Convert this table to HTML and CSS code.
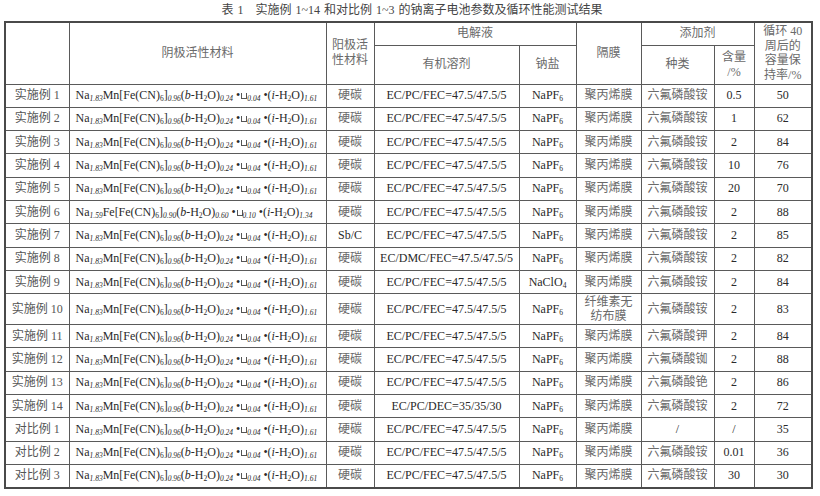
FILE: index.html
```html
<!DOCTYPE html>
<html lang="zh">
<head>
<meta charset="utf-8">
<title>表 1</title>
<link rel="stylesheet" href="styles.css">
</head>
<body>
<div class="title">表 1　实施例 1~14 和对比例 1~3 的钠离子电池参数及循环性能测试结果</div>
<table class="data">
  <colgroup>
    <col class="c1"><col class="c2"><col class="c3"><col class="c4"><col class="c5"><col class="c6"><col class="c7"><col class="c8"><col class="c9">
  </colgroup>
  <thead>
    <tr class="h1">
      <th rowspan="2"></th>
      <th rowspan="2" class="cn">阴极活性材料</th>
      <th rowspan="2" class="cn tall">阳极活<br>性材料</th>
      <th colspan="2" class="cn">电解液</th>
      <th rowspan="2" class="cn">隔膜</th>
      <th colspan="2" class="cn">添加剂</th>
      <th rowspan="2" class="cn tight">循环 40<br>周后的<br>容量保<br>持率/%</th>
    </tr>
    <tr class="h2">
      <th class="cn">有机溶剂</th>
      <th class="cn">钠盐</th>
      <th class="cn">种类</th>
      <th class="cn tight">含量<br>/%</th>
    </tr>
  </thead>
  <tbody>
    <tr><td class="lab">实施例 1</td><td class="f">Na<sub><i>1.83</i></sub>Mn[Fe(CN)<sub>6</sub>]<sub><i>0.96</i></sub>(<i>b</i>-H<sub>2</sub>O)<sub><i>0.24</i></sub> •<span class="vac"></span><sub><i>0.04</i></sub> •(<i>i</i>-H<sub>2</sub>O)<sub><i>1.61</i></sub></td><td class="cn">硬碳</td><td>EC/PC/FEC=47.5/47.5/5</td><td>NaPF<sub>6</sub></td><td class="cn">聚丙烯膜</td><td class="cn">六氟磷酸铵</td><td>0.5</td><td>50</td></tr>
    <tr><td class="lab">实施例 2</td><td class="f">Na<sub><i>1.83</i></sub>Mn[Fe(CN)<sub>6</sub>]<sub><i>0.96</i></sub>(<i>b</i>-H<sub>2</sub>O)<sub><i>0.24</i></sub> •<span class="vac"></span><sub><i>0.04</i></sub> •(<i>i</i>-H<sub>2</sub>O)<sub><i>1.61</i></sub></td><td class="cn">硬碳</td><td>EC/PC/FEC=47.5/47.5/5</td><td>NaPF<sub>6</sub></td><td class="cn">聚丙烯膜</td><td class="cn">六氟磷酸铵</td><td>1</td><td>62</td></tr>
    <tr><td class="lab">实施例 3</td><td class="f">Na<sub><i>1.83</i></sub>Mn[Fe(CN)<sub>6</sub>]<sub><i>0.96</i></sub>(<i>b</i>-H<sub>2</sub>O)<sub><i>0.24</i></sub> •<span class="vac"></span><sub><i>0.04</i></sub> •(<i>i</i>-H<sub>2</sub>O)<sub><i>1.61</i></sub></td><td class="cn">硬碳</td><td>EC/PC/FEC=47.5/47.5/5</td><td>NaPF<sub>6</sub></td><td class="cn">聚丙烯膜</td><td class="cn">六氟磷酸铵</td><td>2</td><td>84</td></tr>
    <tr><td class="lab">实施例 4</td><td class="f">Na<sub><i>1.83</i></sub>Mn[Fe(CN)<sub>6</sub>]<sub><i>0.96</i></sub>(<i>b</i>-H<sub>2</sub>O)<sub><i>0.24</i></sub> •<span class="vac"></span><sub><i>0.04</i></sub> •(<i>i</i>-H<sub>2</sub>O)<sub><i>1.61</i></sub></td><td class="cn">硬碳</td><td>EC/PC/FEC=47.5/47.5/5</td><td>NaPF<sub>6</sub></td><td class="cn">聚丙烯膜</td><td class="cn">六氟磷酸铵</td><td>10</td><td>76</td></tr>
    <tr><td class="lab">实施例 5</td><td class="f">Na<sub><i>1.83</i></sub>Mn[Fe(CN)<sub>6</sub>]<sub><i>0.96</i></sub>(<i>b</i>-H<sub>2</sub>O)<sub><i>0.24</i></sub> •<span class="vac"></span><sub><i>0.04</i></sub> •(<i>i</i>-H<sub>2</sub>O)<sub><i>1.61</i></sub></td><td class="cn">硬碳</td><td>EC/PC/FEC=47.5/47.5/5</td><td>NaPF<sub>6</sub></td><td class="cn">聚丙烯膜</td><td class="cn">六氟磷酸铵</td><td>20</td><td>70</td></tr>
    <tr><td class="lab">实施例 6</td><td class="f">Na<sub><i>1.59</i></sub>Fe[Fe(CN)<sub>6</sub>]<sub><i>0.90</i></sub>(<i>b</i>-H<sub>2</sub>O)<sub><i>0.60</i></sub> •<span class="vac"></span><sub><i>0.10</i></sub> •(<i>i</i>-H<sub>2</sub>O)<sub><i>1.34</i></sub></td><td class="cn">硬碳</td><td>EC/PC/FEC=47.5/47.5/5</td><td>NaPF<sub>6</sub></td><td class="cn">聚丙烯膜</td><td class="cn">六氟磷酸铵</td><td>2</td><td>88</td></tr>
    <tr><td class="lab">实施例 7</td><td class="f">Na<sub><i>1.83</i></sub>Mn[Fe(CN)<sub>6</sub>]<sub><i>0.96</i></sub>(<i>b</i>-H<sub>2</sub>O)<sub><i>0.24</i></sub> •<span class="vac"></span><sub><i>0.04</i></sub> •(<i>i</i>-H<sub>2</sub>O)<sub><i>1.61</i></sub></td><td>Sb/C</td><td>EC/PC/FEC=47.5/47.5/5</td><td>NaPF<sub>6</sub></td><td class="cn">聚丙烯膜</td><td class="cn">六氟磷酸铵</td><td>2</td><td>85</td></tr>
    <tr><td class="lab">实施例 8</td><td class="f">Na<sub><i>1.83</i></sub>Mn[Fe(CN)<sub>6</sub>]<sub><i>0.96</i></sub>(<i>b</i>-H<sub>2</sub>O)<sub><i>0.24</i></sub> •<span class="vac"></span><sub><i>0.04</i></sub> •(<i>i</i>-H<sub>2</sub>O)<sub><i>1.61</i></sub></td><td class="cn">硬碳</td><td>EC/DMC/FEC=47.5/47.5/5</td><td>NaPF<sub>6</sub></td><td class="cn">聚丙烯膜</td><td class="cn">六氟磷酸铵</td><td>2</td><td>82</td></tr>
    <tr><td class="lab">实施例 9</td><td class="f">Na<sub><i>1.83</i></sub>Mn[Fe(CN)<sub>6</sub>]<sub><i>0.96</i></sub>(<i>b</i>-H<sub>2</sub>O)<sub><i>0.24</i></sub> •<span class="vac"></span><sub><i>0.04</i></sub> •(<i>i</i>-H<sub>2</sub>O)<sub><i>1.61</i></sub></td><td class="cn">硬碳</td><td>EC/PC/FEC=47.5/47.5/5</td><td>NaClO<sub>4</sub></td><td class="cn">聚丙烯膜</td><td class="cn">六氟磷酸铵</td><td>2</td><td>84</td></tr>
    <tr class="big"><td class="lab">实施例 10</td><td class="f">Na<sub><i>1.83</i></sub>Mn[Fe(CN)<sub>6</sub>]<sub><i>0.96</i></sub>(<i>b</i>-H<sub>2</sub>O)<sub><i>0.24</i></sub> •<span class="vac"></span><sub><i>0.04</i></sub> •(<i>i</i>-H<sub>2</sub>O)<sub><i>1.61</i></sub></td><td class="cn">硬碳</td><td>EC/PC/FEC=47.5/47.5/5</td><td>NaPF<sub>6</sub></td><td class="cn tight">纤维素无<br>纺布膜</td><td class="cn">六氟磷酸铵</td><td>2</td><td>83</td></tr>
    <tr><td class="lab">实施例 11</td><td class="f">Na<sub><i>1.83</i></sub>Mn[Fe(CN)<sub>6</sub>]<sub><i>0.96</i></sub>(<i>b</i>-H<sub>2</sub>O)<sub><i>0.24</i></sub> •<span class="vac"></span><sub><i>0.04</i></sub> •(<i>i</i>-H<sub>2</sub>O)<sub><i>1.61</i></sub></td><td class="cn">硬碳</td><td>EC/PC/FEC=47.5/47.5/5</td><td>NaPF<sub>6</sub></td><td class="cn">聚丙烯膜</td><td class="cn">六氟磷酸钾</td><td>2</td><td>84</td></tr>
    <tr><td class="lab">实施例 12</td><td class="f">Na<sub><i>1.83</i></sub>Mn[Fe(CN)<sub>6</sub>]<sub><i>0.96</i></sub>(<i>b</i>-H<sub>2</sub>O)<sub><i>0.24</i></sub> •<span class="vac"></span><sub><i>0.04</i></sub> •(<i>i</i>-H<sub>2</sub>O)<sub><i>1.61</i></sub></td><td class="cn">硬碳</td><td>EC/PC/FEC=47.5/47.5/5</td><td>NaPF<sub>6</sub></td><td class="cn">聚丙烯膜</td><td class="cn">六氟磷酸铷</td><td>2</td><td>88</td></tr>
    <tr><td class="lab">实施例 13</td><td class="f">Na<sub><i>1.83</i></sub>Mn[Fe(CN)<sub>6</sub>]<sub><i>0.96</i></sub>(<i>b</i>-H<sub>2</sub>O)<sub><i>0.24</i></sub> •<span class="vac"></span><sub><i>0.04</i></sub> •(<i>i</i>-H<sub>2</sub>O)<sub><i>1.61</i></sub></td><td class="cn">硬碳</td><td>EC/PC/FEC=47.5/47.5/5</td><td>NaPF<sub>6</sub></td><td class="cn">聚丙烯膜</td><td class="cn">六氟磷酸铯</td><td>2</td><td>86</td></tr>
    <tr><td class="lab">实施例 14</td><td class="f">Na<sub><i>1.83</i></sub>Mn[Fe(CN)<sub>6</sub>]<sub><i>0.96</i></sub>(<i>b</i>-H<sub>2</sub>O)<sub><i>0.24</i></sub> •<span class="vac"></span><sub><i>0.04</i></sub> •(<i>i</i>-H<sub>2</sub>O)<sub><i>1.61</i></sub></td><td class="cn">硬碳</td><td>EC/PC/DEC=35/35/30</td><td>NaPF<sub>6</sub></td><td class="cn">聚丙烯膜</td><td class="cn">六氟磷酸铵</td><td>2</td><td>72</td></tr>
    <tr><td class="lab">对比例 1</td><td class="f">Na<sub><i>1.83</i></sub>Mn[Fe(CN)<sub>6</sub>]<sub><i>0.96</i></sub>(<i>b</i>-H<sub>2</sub>O)<sub><i>0.24</i></sub> •<span class="vac"></span><sub><i>0.04</i></sub> •(<i>i</i>-H<sub>2</sub>O)<sub><i>1.61</i></sub></td><td class="cn">硬碳</td><td>EC/PC/FEC=47.5/47.5/5</td><td>NaPF<sub>6</sub></td><td class="cn">聚丙烯膜</td><td>/</td><td>/</td><td>35</td></tr>
    <tr><td class="lab">对比例 2</td><td class="f">Na<sub><i>1.83</i></sub>Mn[Fe(CN)<sub>6</sub>]<sub><i>0.96</i></sub>(<i>b</i>-H<sub>2</sub>O)<sub><i>0.24</i></sub> •<span class="vac"></span><sub><i>0.04</i></sub> •(<i>i</i>-H<sub>2</sub>O)<sub><i>1.61</i></sub></td><td class="cn">硬碳</td><td>EC/PC/FEC=47.5/47.5/5</td><td>NaPF<sub>6</sub></td><td class="cn">聚丙烯膜</td><td class="cn">六氟磷酸铵</td><td>0.01</td><td>36</td></tr>
    <tr><td class="lab">对比例 3</td><td class="f">Na<sub><i>1.83</i></sub>Mn[Fe(CN)<sub>6</sub>]<sub><i>0.96</i></sub>(<i>b</i>-H<sub>2</sub>O)<sub><i>0.24</i></sub> •<span class="vac"></span><sub><i>0.04</i></sub> •(<i>i</i>-H<sub>2</sub>O)<sub><i>1.61</i></sub></td><td class="cn">硬碳</td><td>EC/PC/FEC=47.5/47.5/5</td><td>NaPF<sub>6</sub></td><td class="cn">聚丙烯膜</td><td class="cn">六氟磷酸铵</td><td>30</td><td>30</td></tr>
  </tbody>
</table>
</body>
</html>
```
FILE: styles.css
```css
html, body {
  margin: 0;
  padding: 0;
  background: #ffffff;
}

body {
  font-family: "Liberation Serif", "Noto Sans CJK SC", serif;
  font-size: 12px;
  color: #2a2a2a;
}

.title {
  height: 21px;
  line-height: 20px;
  text-align: center;
  color: #444;
  font-size: 12px;
  padding-left: 4px;
  word-spacing: 1px;
}

.data {
  border-collapse: collapse;
  table-layout: fixed;
  width: 807px;
  margin-left: 4px;
  border: 2px solid #4a4a4a;
}

.c1 { width: 64px; }
.c2 { width: 257px; }
.c3 { width: 48px; }
.c4 { width: 145px; }
.c5 { width: 57px; }
.c6 { width: 65px; }
.c7 { width: 73px; }
.c8 { width: 40px; }
.c9 { width: 58px; }

.data th,
.data td {
  border: 1px solid #5a5a5a;
  padding: 0;
  text-align: center;
  vertical-align: middle;
  font-weight: normal;
  white-space: nowrap;
  line-height: 15px;
}

.data .h1 { height: 23px; }
.data .h2 { height: 39px; }
.data tbody tr { height: 23.3px; }
.data tbody tr.big { height: 31px; }

.cn {
  color: #6a6a6a;
}

.lab {
  color: #555;
}

.tall { line-height: 19px; }
.data .tight { line-height: 14.5px; }

.data td.f {
  text-align: left;
  padding-left: 6px;
  color: #2a2a2a;
}

.data sub {
  font-size: 7.5px;
  line-height: 0;
  vertical-align: -2px;
}

.vac {
  display: inline-block;
  width: 4px;
  height: 5px;
  border: 1px solid #555;
  border-top: none;
  margin-left: 1px;
  vertical-align: 0;
}
```
